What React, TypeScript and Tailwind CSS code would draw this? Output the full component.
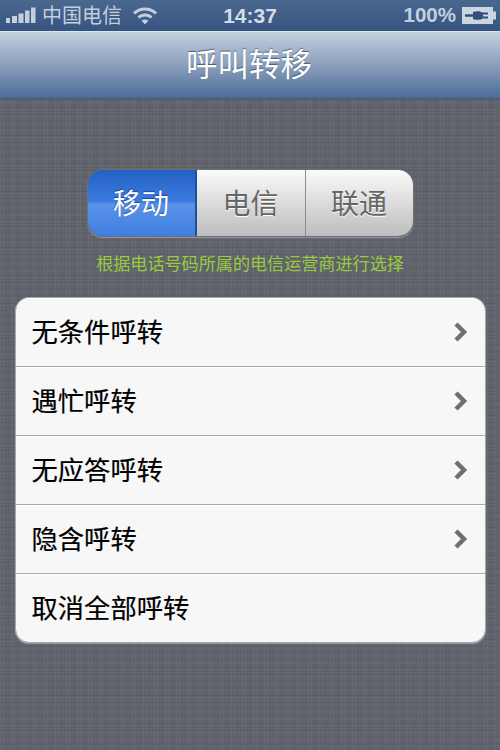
import React from "react";

const cjk = "font-['Liberation_Sans','Noto_Sans_CJK_SC',sans-serif]";

function Signal() {
  return (
    <svg width="30" height="18" viewBox="0 0 30 18" className="block">
      <g fill="#c3cfdf">
        <rect x="0" y="11" width="4" height="5" />
        <rect x="6" y="9" width="5" height="7" />
        <rect x="12.5" y="6.5" width="5" height="9.5" />
        <rect x="19" y="3.500" width="4.500" height="12.500" />
        <rect x="25" y="0.500" width="4.500" height="15.500" />
      </g>
    </svg>
  );
}

function Wifi() {
  return (
    <svg width="26" height="18" viewBox="0 0 26 18" className="block">
      <g fill="none" stroke="#c3cfdf" strokeWidth="3">
        <path d="M2 6.500 C8 0.500 18 0.500 24 6.500" />
        <path d="M6.500 10.500 C10 7 16 7 19.500 10.500" />
      </g>
      <path d="M13 17.500 L9.500 13.500 C11.500 12 14.500 12 16.500 13.500 Z" fill="#c3cfdf" />
    </svg>
  );
}

function Battery() {
  return (
    <svg width="34" height="20" viewBox="0 0 34 20" className="block">
      <rect x="0" y="1" width="31" height="17" fill="#cdd5e0" />
      <rect x="31" y="5.500" width="3" height="8" fill="#cdd5e0" />
      <path d="M3 9.500 H12" stroke="#33507a" strokeWidth="2.500" />
      <path d="M11 6 C15 4.500 19 5 21 7 V12 C19 14 15 14.500 11 13 Z" fill="#33507a" />
      <path d="M20 7.500 H26 M20 11.500 H26" stroke="#33507a" strokeWidth="1.800" />
    </svg>
  );
}

function Chevron() {
  return (
    <svg width="18" height="22" viewBox="0 0 18 22" className="mb-[2px] block">
      <path d="M4 3 L12 11 L4 19" fill="none" stroke="#6f6f6f" strokeWidth="4.500" />
    </svg>
  );
}

function Row({ label, chevron = true, last = false }: { label: string; chevron?: boolean; last?: boolean }) {
  return (
    <div
      className={`flex items-center justify-between pl-[16px] pr-[15px] border-t border-t-white ${
        last ? "h-[68px]" : "h-[69px] border-b border-b-[#a9a9a9]"
      }`}
    >
      <span className="pt-[2px] text-[26.300px] leading-none text-black [-webkit-text-stroke:0.2px_black]">{label}</span>
      {chevron && <Chevron />}
    </div>
  );
}

export default function App() {
  return (
    <div className={`${cjk} flex h-[750px] w-[500px] flex-col overflow-hidden bg-[#62656f]`}>
      <div className="flex h-[31px] items-center justify-between bg-gradient-to-b from-[#4a688f] to-[#365480] pl-[6px] pr-[4px] text-[#c3cfdf]">
        <div className="flex w-[170px] items-center">
          <Signal />
          <span className="ml-[6px] text-[20px] leading-none">中国电信</span>
          <span className="ml-[10px]">
            <Wifi />
          </span>
        </div>
        <span className="mr-[2px] text-[21px] font-bold leading-none text-[#d3dbe6]">14:37</span>
        <div className="flex w-[170px] items-center justify-end">
          <span className="mr-[6px] text-[20.500px] font-bold leading-none">100%</span>
          <Battery />
        </div>
      </div>

      <div className="flex h-[68px] items-center justify-center border-t border-t-[#dde4ee] border-b border-b-[#3f5c85] bg-gradient-to-b from-[#c3cfdf] via-[#8ba0bd] to-[#4b6b96]">
        <span className="mr-[2px] pt-[2px] text-[31.500px] leading-none text-white [text-shadow:0_-1px_1px_rgba(50,60,80,0.7)]">
          呼叫转移
        </span>
      </div>

      <div className="flex flex-1 flex-col items-center bg-[#62656f] bg-[repeating-linear-gradient(0deg,rgba(255,255,255,0.025)_0px,rgba(255,255,255,0.025)_1px,rgba(0,0,0,0.025)_1px,rgba(0,0,0,0.025)_2px,rgba(255,255,255,0.02)_2px,rgba(255,255,255,0.02)_5px,rgba(0,0,0,0.03)_5px,rgba(0,0,0,0.03)_7px),repeating-linear-gradient(90deg,rgba(255,255,255,0.025)_0px,rgba(255,255,255,0.025)_1px,rgba(0,0,0,0.03)_1px,rgba(0,0,0,0.03)_3px,rgba(255,255,255,0.02)_3px,rgba(255,255,255,0.02)_4px,rgba(0,0,0,0.035)_4px,rgba(0,0,0,0.035)_11px)]">
        <div className="mt-[70px] flex h-[68px] w-[327px] overflow-hidden rounded-[16px] shadow-[0_1px_1px_rgba(255,255,255,0.35)] border border-[#6c6f78]">
          <div className="flex w-[109px] items-center justify-center border-r-2 border-r-[#1d4f9c] bg-[linear-gradient(180deg,#2360c4_0%,#3d7ce0_48%,#5a92e8_52%,#3f7fe2_100%)]">
            <span className="pt-[3px] text-[28px] leading-none text-white [text-shadow:0_-1px_1px_rgba(20,50,110,0.7)]">移动</span>
          </div>
          <div className="flex w-[109px] items-center justify-center border-r border-r-[#8d8d8d] bg-gradient-to-b from-[#fbfbfb] to-[#bdbdbd]">
            <span className="pt-[3px] text-[28px] leading-none text-[#666] [text-shadow:0_1px_0_#fff]">电信</span>
          </div>
          <div className="flex flex-1 items-center justify-center bg-gradient-to-b from-[#fbfbfb] to-[#bdbdbd]">
            <span className="pt-[3px] text-[28px] leading-none text-[#666] [text-shadow:0_1px_0_#fff]">联通</span>
          </div>
        </div>

        <div className="mt-[18px] text-[17.100px] leading-[20px] text-[#9acb3c]">根据电话号码所属的电信运营商进行选择</div>

        <div className="mt-[22px] w-[471px] overflow-hidden rounded-[14px] border border-[#a5a6aa] bg-[#f7f7f7] shadow-[0_1px_1px_rgba(255,255,255,0.4)]">
          <Row label="无条件呼转" />
          <Row label="遇忙呼转" />
          <Row label="无应答呼转" />
          <Row label="隐含呼转" />
          <Row label="取消全部呼转" chevron={false} last />
        </div>
      </div>
    </div>
  );
}
